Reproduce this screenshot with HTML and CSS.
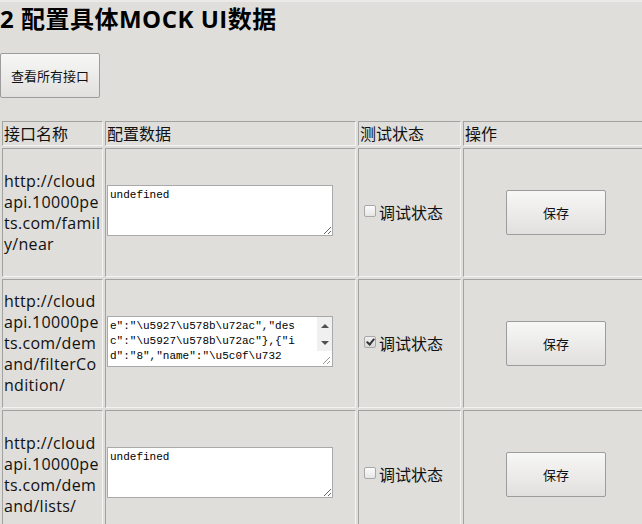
FILE: index.html
```html
<!DOCTYPE html>
<html lang="zh">
<head>
<meta charset="utf-8">
<title>配置具体MOCK UI数据</title>
<link rel="stylesheet" href="styles.css">
</head>
<body>
<h2 class="title">2 配置具体MOCK UI数据</h2>
<div class="toolbar"><button class="btn btn-list">查看所有接口</button></div>
<table class="api-table">
  <thead>
    <tr>
      <th class="col-name">接口名称</th>
      <th class="col-data">配置数据</th>
      <th class="col-status">测试状态</th>
      <th class="col-op">操作</th>
    </tr>
  </thead>
  <tbody>
    <tr>
      <td class="url">http://cloudapi.10000pets.com/family/near</td>
      <td><textarea class="data">undefined</textarea></td>
      <td><label class="status"><input type="checkbox" class="check">调试状态</label></td>
      <td class="op"><button class="btn btn-save">保存</button></td>
    </tr>
    <tr>
      <td class="url">http://cloudapi.10000pets.com/demand/filterCondition/</td>
      <td>
        <div class="data-wrap">
          <textarea class="data scroll">e":"\u5927\u578b\u72ac","des
c":"\u5927\u578b\u72ac"},{"i
d":"8","name":"\u5c0f\u732
b","desc":"\u5c0f\u732b"}]}
]}</textarea>
          <div class="vscroll" aria-hidden="true">
            <span class="sb-btn sb-up"></span>
            <span class="sb-btn sb-down"></span>
            <span class="sb-corner"><svg width="15" height="15" viewBox="0 0 15 15"><path d="M13 6L6 13M13 10L10 13" stroke="#9a9a9a" stroke-width="1" fill="none"/></svg></span>
          </div>
        </div>
      </td>
      <td><label class="status"><input type="checkbox" class="check" checked>调试状态</label></td>
      <td class="op"><button class="btn btn-save">保存</button></td>
    </tr>
    <tr>
      <td class="url">http://cloudapi.10000pets.com/demand/lists/</td>
      <td><textarea class="data">undefined</textarea></td>
      <td><label class="status"><input type="checkbox" class="check">调试状态</label></td>
      <td class="op"><button class="btn btn-save">保存</button></td>
    </tr>
  </tbody>
</table>
</body>
</html>
```
FILE: styles.css
```css
html, body {
  margin: 0;
  padding: 0;
  background: #dfdedb;
  overflow: hidden;
}

body {
  border-top: 2px solid #ebeae8;
  color: #111;
  font-family: "Open Sans", "Noto Sans CJK SC", sans-serif;
}

.title {
  margin: 2px 0 0 0;
  font: bold 24px/30px "Open Sans", "Noto Sans CJK SC", sans-serif;
  letter-spacing: 0.5px;
  color: #000;
}

.toolbar {
  margin-top: 19px;
}

.btn {
  font: 13px/1 "Noto Sans CJK SC", sans-serif;
  color: #111;
  background: linear-gradient(#f7f7f6, #e1e0de);
  border: 1px solid #9c9c9c;
  border-radius: 2px;
  padding: 0;
  margin: 0;
}

.btn-list,
.btn-save {
  width: 100px;
  height: 45px;
}

.api-table {
  margin-top: 21px;
  border-spacing: 2px;
  table-layout: fixed;
  width: 651px;
}

.api-table th,
.api-table td {
  box-sizing: border-box;
  border: 1px solid;
  border-color: #a2a2a0 #f3f3f1 #f3f3f1 #a2a2a0;
  padding: 1px;
  vertical-align: middle;
  text-align: left;
  font-weight: normal;
  font-size: 16px;
  line-height: 21px;
  font-family: "Open Sans", "Noto Sans CJK SC", sans-serif;
}

.api-table th {
  padding-top: 2px;
  padding-bottom: 0;
}

.api-table thead tr {
  height: 25px;
}

.api-table tbody tr {
  height: 129px;
}

.col-name { width: 101px; }
.col-data { width: 251px; }
.col-status { width: 103px; }
.col-op { width: 186px; }

.url {
  word-break: break-all;
  letter-spacing: 0.3px;
}

.data {
  display: block;
  box-sizing: border-box;
  width: 226px;
  height: 51px;
  margin: 0 0 4px 0;
  padding: 2px;
  border: 1px solid #a9a9a9;
  background: #fff;
  color: #000;
  font: 11px/15px "Liberation Mono", monospace;
}

.data-wrap {
  position: relative;
  width: 226px;
  margin-bottom: 4px;
}

.data-wrap .data {
  margin: 0;
  padding-right: 17px;
  overflow: hidden;
  resize: none;
}

.vscroll {
  position: absolute;
  top: 1px;
  right: 1px;
  bottom: 1px;
  width: 15px;
  display: flex;
  flex-direction: column;
  background: #f0f0f0;
}

.sb-btn {
  height: 17px;
  display: flex;
  align-items: center;
  justify-content: center;
}

.sb-btn::before {
  content: "";
  width: 0;
  height: 0;
  border-left: 4px solid transparent;
  border-right: 4px solid transparent;
}

.sb-up::before {
  border-bottom: 4px solid #505050;
}

.sb-down::before {
  border-top: 4px solid #505050;
}

.sb-corner {
  margin-top: auto;
  height: 15px;
  background: #fff;
  display: block;
}

.sb-corner svg {
  display: block;
}

.status {
  font-family: "Noto Sans CJK SC", sans-serif;
  white-space: nowrap;
}

.check {
  appearance: none;
  -webkit-appearance: none;
  box-sizing: border-box;
  width: 12px;
  height: 12px;
  margin: 3px 3px 3px 4px;
  border: 1px solid #a8a8a8;
  border-radius: 2px;
  background: linear-gradient(#fbfbfb, #e6e6e6);
  vertical-align: -1px;
  position: relative;
}

.check:checked {
  background: linear-gradient(#f0f0f0, #d8d8d8);
}

.check:checked::after {
  content: "";
  position: absolute;
  left: 3px;
  top: 0px;
  width: 3px;
  height: 6px;
  border: solid #333;
  border-width: 0 2px 2px 0;
  transform: rotate(40deg);
}

.op {
  text-align: center !important;
}
```
